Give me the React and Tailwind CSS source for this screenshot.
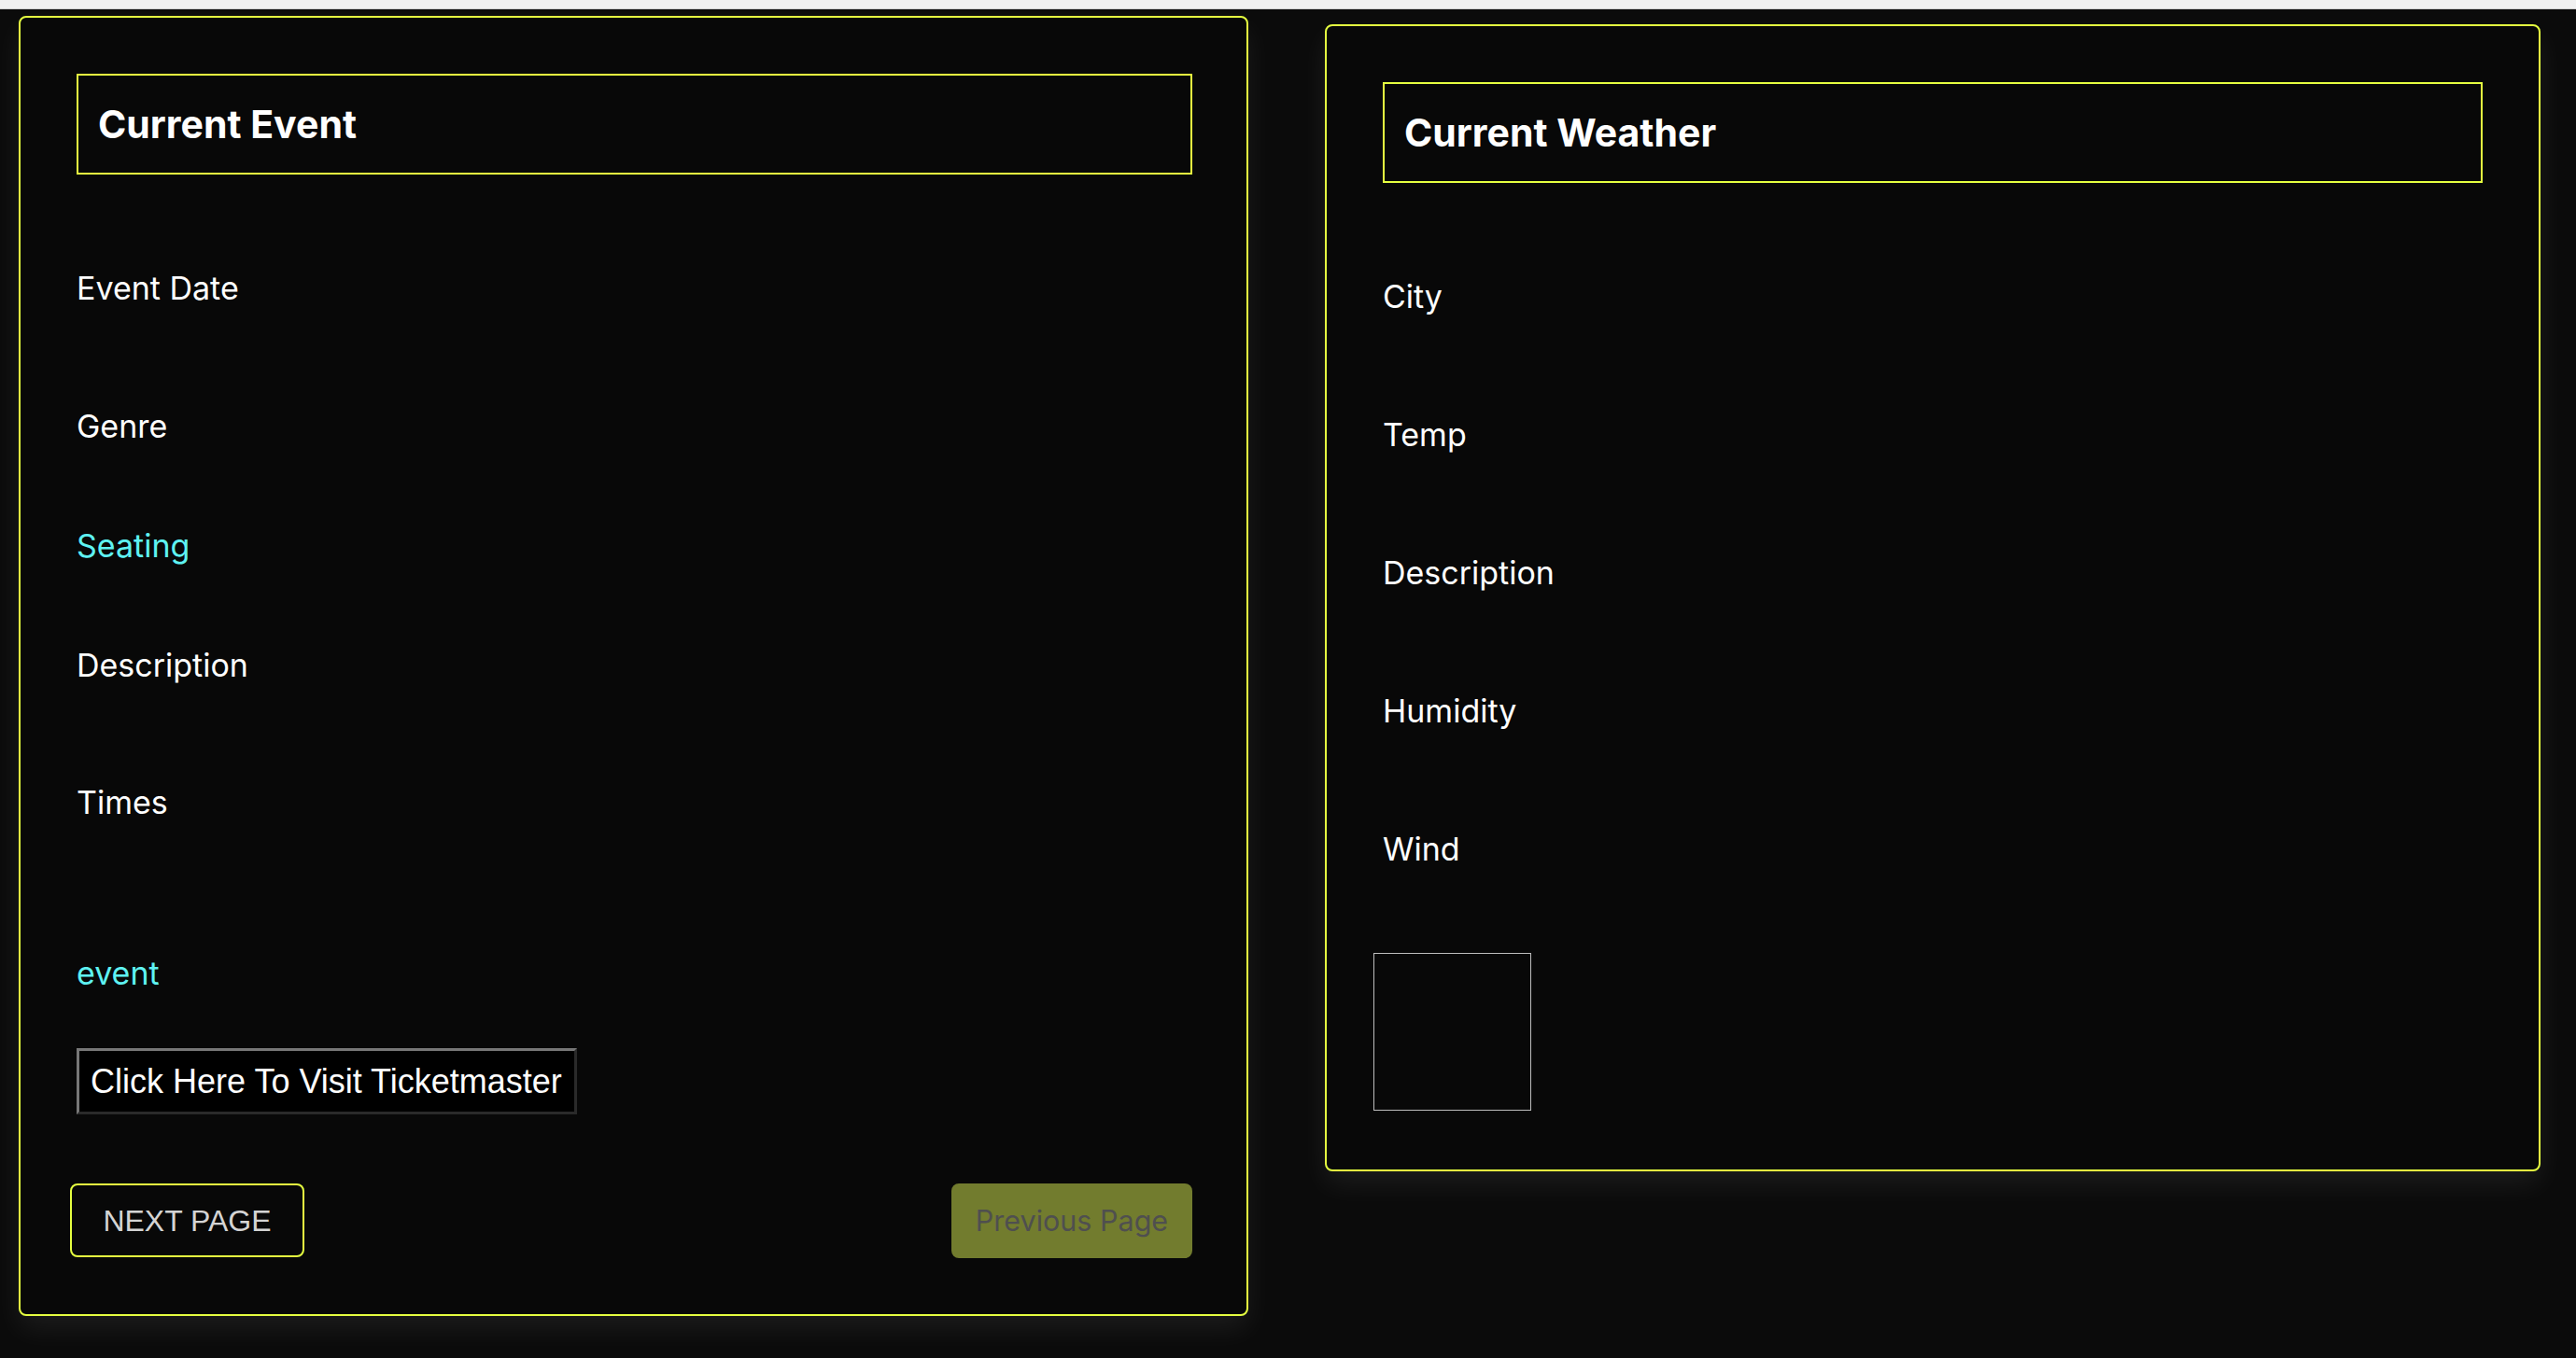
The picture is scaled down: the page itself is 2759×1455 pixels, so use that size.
import React from 'react'

const eventFields = [
    { label: 'Event Date', gap: 'mt-[102px]' },
    { label: 'Genre', gap: 'mt-[108px]' },
    { label: 'Seating', gap: 'mt-[88px]', link: true },
    { label: 'Description', gap: 'mt-[88px]' },
    { label: 'Times', gap: 'mt-[107px]' },
]

const weatherFields = ['City', 'Temp', 'Description', 'Humidity', 'Wind']

function CardHeader({ title }) {
    return (
        <div className="flex items-center h-[108px] border-2 border-[#e5ff40] pl-[21px]">
            <h2 className="text-[41px] leading-[50px] font-bold text-white">{title}</h2>
        </div>
    )
}

function EventCard() {
    return (
        <div className="w-[1317px] flex flex-col bg-[#080808] border-2 border-[#e5ff40] rounded-[8px] pt-[60px] pb-[60px] pl-[60px] pr-[58px] shadow-[0_14px_30px_rgba(255,255,255,0.07)]">
            <CardHeader title="Current Event" />

            {eventFields.map((f) => (
                <p key={f.label} className={`${f.gap} text-[34px] leading-[40px] ${f.link ? 'text-[#5ef2f2]' : 'text-white'}`}>
                    {f.label}
                </p>
            ))}

            <a className="mt-[143px] text-[34px] leading-[40px] text-[#5ef2f2]">event</a>

            <button className="mt-[60px] self-start h-[71px] pl-[12px] pr-[13px] bg-black border-[3px] border-t-[#777777] border-l-[#777777] border-b-[#2a2a2a] border-r-[#2a2a2a] text-white text-[36px] leading-[41px] font-['Liberation_Sans',Arial,sans-serif]">
                Click Here To Visit Ticketmaster
            </button>

            <div className="mt-[74px] flex justify-between items-start">
                <button className="-ml-[7px] w-[251px] h-[79px] border-2 border-[#e5ff40] rounded-[8px] text-[#d4d4d4] text-[32px] font-['Liberation_Sans',Arial,sans-serif]">
                    NEXT PAGE
                </button>
                <button className="w-[258px] h-[80px] bg-[#727c2e] rounded-[8px] text-[#4f4f4f] text-[30.5px]">
                    Previous Page
                </button>
            </div>
        </div>
    )
}

function WeatherCard() {
    return (
        <div className="mt-[9px] w-[1302px] flex flex-col bg-[#080808] border-2 border-[#e5ff40] rounded-[8px] pt-[60px] pb-[63px] px-[60px] shadow-[0_14px_30px_rgba(255,255,255,0.07)]">
            <CardHeader title="Current Weather" />

            {weatherFields.map((label, i) => (
                <p key={label} className={`${i === 0 ? 'mt-[102px]' : 'mt-[108px]'} text-[34px] leading-[40px] text-white`}>
                    {label}
                </p>
            ))}

            <div className="mt-[91px] -ml-[10px] w-[169px] h-[169px] border border-[#bdbdbd]" />
        </div>
    )
}

export default function App() {
    return (
        <div className="min-h-screen bg-[#0b0b0b] font-['Inter','Noto_Sans',sans-serif]">
            <div className="h-[10px] bg-[#f0f0f0] border-b border-[#cfcfcf]" />
            <div className="flex items-start gap-[82px] pl-[20px] pt-[7px] pb-[40px]">
                <EventCard />
                <WeatherCard />
            </div>
        </div>
    )
}
